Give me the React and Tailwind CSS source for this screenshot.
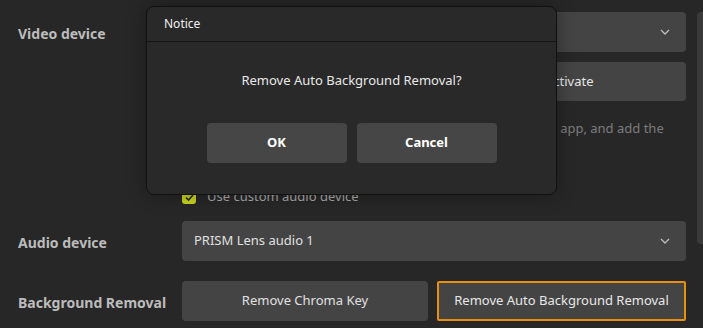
import React from "react";

function Chevron() {
  return (
    <svg width="10" height="6" viewBox="0 0 10 6" className="shrink-0">
      <path d="M1 1 L5 5 L9 1" fill="none" stroke="#bdbdbd" strokeWidth="1.3" />
    </svg>
  );
}

export default function App() {
  const font = { fontFamily: '"Segoe UI","Noto Sans","Open Sans",sans-serif' };
  return (
    <div className="relative w-[703px] h-[328px] overflow-hidden bg-[#272727] text-[#dcdcdc]" style={font}>
      <div className="flex h-full">
        <div className="flex-1 pl-[18px] pr-[11px] pt-[12px] grid grid-cols-[164px_1fr] content-start">
          <div className="h-10 flex items-center pt-[2px] text-[14px] font-bold text-[#bcbcbc]">Video device</div>
          <div className="h-10 rounded bg-[#444444] flex items-center justify-between pl-3 pr-[16px]">
            <span className="text-[13px]">PRISM Lens</span>
            <Chevron />
          </div>

          <div />
          <div className="mt-[10px] h-[39px] rounded bg-[#444444] flex items-center pl-[363px] text-[13px] text-[#e6e6e6]">
            <span className="whitespace-nowrap">Activate</span>
          </div>

          <div />
          <div className="mt-[17px] text-[13px] leading-[20px] text-[#7c7c7c] whitespace-nowrap">
            To use the new virtual camera, install and run the PRISM Lens app, and add the
            <br />
            PRISM Lens source.
          </div>

          <div />
          <div className="mt-[32px] flex items-center gap-[11px] h-[14px]">
            <div className="w-[14px] h-[14px] rounded-[3px] bg-[#c5d41e] flex items-center justify-center">
              <svg width="9" height="7" viewBox="0 0 9 7">
                <path d="M1 3.5 L3.5 6 L8 1" fill="none" stroke="#2a2a2a" strokeWidth="1.6" />
              </svg>
            </div>
            <span className="text-[13px] text-[#a9a9a9]">Use custom audio device</span>
          </div>

          <div className="mt-[17px] h-10 flex items-center pt-[2px] text-[14px] font-bold text-[#bcbcbc]">Audio device</div>
          <div className="mt-[17px] h-10 rounded bg-[#444444] flex items-center justify-between pl-3 pr-[16px]">
            <span className="text-[13px] text-[#e0e0e0]">PRISM Lens audio 1</span>
            <Chevron />
          </div>

          <div className="mt-5 h-10 flex items-center pt-[2px] text-[14px] font-bold text-[#bcbcbc] whitespace-nowrap">Background Removal</div>
          <div className="mt-5 h-10 grid grid-cols-[246px_1fr] gap-[9px]">
            <div className="rounded bg-[#444444] flex items-center justify-center text-[13px] text-[#e0e0e0]">Remove Chroma Key</div>
            <div className="rounded-[2px] bg-[#444444] border-2 border-[#ea8f0c] flex items-center justify-center text-[13px] text-[#e8e8e8]">Remove Auto Background Removal</div>
          </div>
        </div>
        <div className="w-[6px] pt-[12px]">
          <div className="h-[232px] rounded-l bg-[#3a3a3a]" />
        </div>
      </div>

      {/* Dialog */}
      <div className="absolute left-[146px] top-[6px] w-[411px] h-[189px] rounded-lg border border-[#111] bg-[#292929] shadow-[0_0_18px_rgba(0,0,0,0.35)] flex flex-col">
        <div className="h-[35px] flex items-center pl-[17px] text-[12px] text-[#f0f0f0] border-b border-[#151515]">Notice</div>
        <div className="flex-1 flex flex-col items-center">
          <div className="mt-[29px] text-[13px] text-[#e8e8e8]">Remove Auto Background Removal?</div>
          <div className="mt-[32px] flex gap-[10px]">
            <div className="w-[140px] h-10 rounded bg-[#464646] flex items-center justify-center text-[13px] font-bold text-white">OK</div>
            <div className="w-[140px] h-10 rounded bg-[#464646] flex items-center justify-center text-[13px] font-bold text-white">Cancel</div>
          </div>
        </div>
      </div>
    </div>
  );
}
